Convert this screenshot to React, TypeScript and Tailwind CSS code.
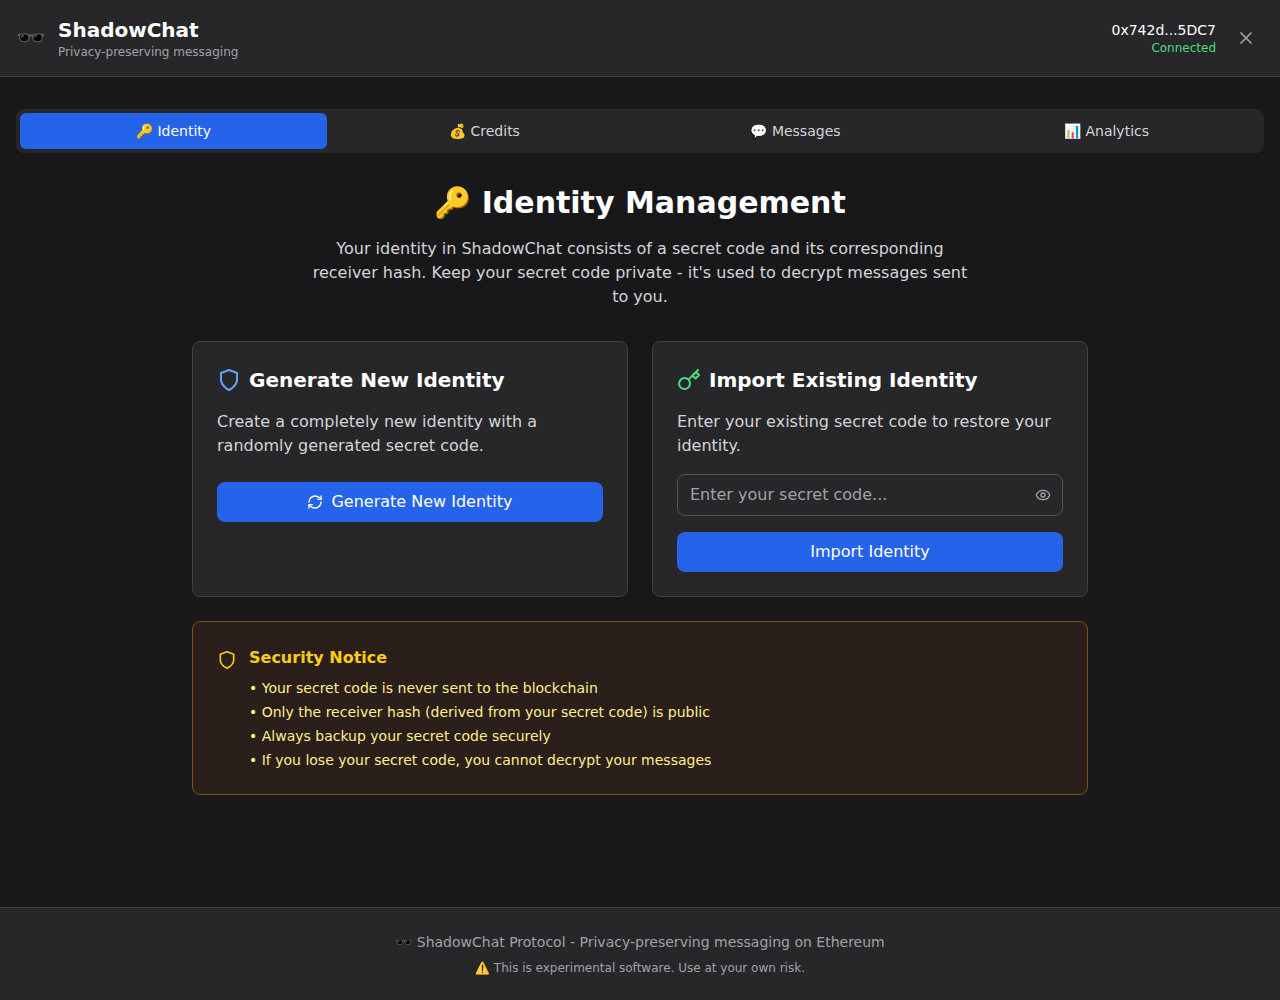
import React from "react";
import { RefreshCw, Eye, X } from "lucide-react";

const tabs = [
  { label: "🔑 Identity", active: true },
  { label: "💰 Credits", active: false },
  { label: "💬 Messages", active: false },
  { label: "📊 Analytics", active: false },
];

const notices = [
  "Your secret code is never sent to the blockchain",
  "Only the receiver hash (derived from your secret code) is public",
  "Always backup your secret code securely",
  "If you lose your secret code, you cannot decrypt your messages",
];

function Icon({ d, size, className }: { d: string; size: number; className: string }) {
  return (
    <svg
      width={size}
      height={size}
      viewBox="0 0 24 24"
      fill="none"
      stroke="currentColor"
      strokeWidth={2}
      strokeLinecap="round"
      strokeLinejoin="round"
      className={className}
    >
      <path d={d} />
    </svg>
  );
}

const shieldPath = "M12 22s8-4 8-10V5l-8-3-8 3v7c0 6 8 10 8 10";
const keyPath =
  "m21 2-2 2m-7.61 7.61a5.5 5.5 0 1 1-7.778 7.778 5.5 5.5 0 0 1 7.777-7.777zm0 0L15.5 7.5m0 0 3 3L22 7l-3-3m-3.5 3.5L19 4";

function Header() {
  return (
    <header className="border-b border-[#3f3f46] bg-[#27272a] p-4">
      <div className="flex items-center justify-between">
        <div className="flex items-center gap-3">
          <div className="text-2xl">🕶️</div>
          <div>
            <h1 className="text-xl font-bold text-white">ShadowChat</h1>
            <p className="text-xs text-[#a1a1aa]">Privacy-preserving messaging</p>
          </div>
        </div>
        <div className="flex items-center gap-3">
          <div className="text-right">
            <div className="text-sm text-white">0x742d...5DC7</div>
            <div className="text-xs text-[#4ade80]">Connected</div>
          </div>
          <button className="p-2 text-[#a1a1aa]" aria-label="Disconnect">
            <X size={20} />
          </button>
        </div>
      </div>
    </header>
  );
}

function Tabs() {
  return (
    <nav className="mb-8 flex gap-1 rounded-lg bg-[#27272a] p-1">
      {tabs.map((tab) => (
        <button
          key={tab.label}
          className={
            tab.active
              ? "flex-1 rounded-md bg-[#2563eb] px-4 py-2 text-sm font-medium text-white"
              : "flex-1 rounded-md px-4 py-2 text-sm font-medium text-[#d4d4d8]"
          }
        >
          {tab.label}
        </button>
      ))}
    </nav>
  );
}

function Identity() {
  return (
    <div className="mx-auto max-w-4xl space-y-6">
      <div className="mb-8 text-center">
        <h2 className="mb-4 text-3xl font-bold text-white">🔑 Identity Management</h2>
        <p className="mx-auto max-w-2xl text-[#d4d4d8]">
          Your identity in ShadowChat consists of a secret code and its corresponding receiver hash.
          Keep your secret code private - it's used to decrypt messages sent to you.
        </p>
      </div>

      <div className="grid grid-cols-2 gap-6">
        <section className="rounded-lg border border-[#3f3f46] bg-[#27272a] p-6">
          <div className="mb-4 flex items-center">
            <Icon d={shieldPath} size={24} className="mr-2 text-[#60a5fa]" />
            <h3 className="text-xl font-semibold text-white">Generate New Identity</h3>
          </div>
          <p className="mb-6 text-[#d4d4d8]">
            Create a completely new identity with a randomly generated secret code.
          </p>
          <button className="flex w-full items-center justify-center rounded-lg bg-[#2563eb] px-4 py-2 font-medium text-white">
            <RefreshCw size={16} className="mr-2" />
            Generate New Identity
          </button>
        </section>

        <section className="rounded-lg border border-[#3f3f46] bg-[#27272a] p-6">
          <div className="mb-4 flex items-center">
            <Icon d={keyPath} size={24} className="mr-2 text-[#4ade80]" />
            <h3 className="text-xl font-semibold text-white">Import Existing Identity</h3>
          </div>
          <p className="mb-4 text-[#d4d4d8]">
            Enter your existing secret code to restore your identity.
          </p>
          <div className="mb-4 flex items-center rounded-lg border border-[#52525b] bg-[#27272a] pr-[11px]">
            <input
              type="password"
              placeholder="Enter your secret code..."
              className="min-w-0 flex-1 px-3 py-2 text-white outline-none placeholder:text-[#a1a1aa]"
            />
            <Eye size={16} className="text-[#a1a1aa]" />
          </div>
          <button className="w-full rounded-lg bg-[#2563eb] px-4 py-2 font-medium text-white">
            Import Identity
          </button>
        </section>
      </div>

      <section className="rounded-lg border border-[#7c500b] bg-[#2b1f1b] p-6">
        <div className="flex items-start">
          <Icon d={shieldPath} size={20} className="mt-1 mr-3 text-[#facc15]" />
          <div>
            <h4 className="mb-2 font-semibold text-[#facc15]">Security Notice</h4>
            <ul className="space-y-1 text-sm text-[#fef08a]">
              {notices.map((n) => (
                <li key={n}>• {n}</li>
              ))}
            </ul>
          </div>
        </div>
      </section>
    </div>
  );
}

export default function App() {
  return (
    <div className="flex min-h-screen flex-col bg-[#18181b] font-['DejaVu_Sans',sans-serif] text-white">
      <Header />
      <main className="w-full flex-1 px-4 py-8">
        <Tabs />
        <Identity />
      </main>
      <footer className="border-t border-[#3f3f46] bg-[#27272a] px-4 py-6 text-center">
        <p className="text-sm text-[#a1a1aa]">
          🕶️ ShadowChat Protocol - Privacy-preserving messaging on Ethereum
        </p>
        <p className="mt-2 text-xs text-[#a1a1aa]">
          ⚠️ This is experimental software. Use at your own risk.
        </p>
      </footer>
    </div>
  );
}
